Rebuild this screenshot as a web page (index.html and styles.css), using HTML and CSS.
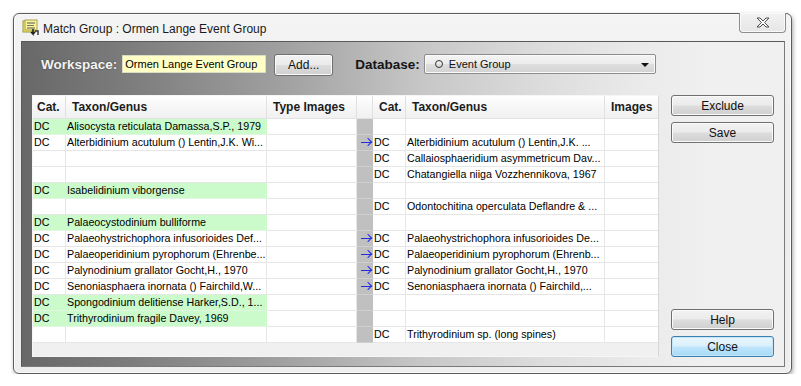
FILE: index.html
```html
<!DOCTYPE html>
<html lang="en">
<head>
    <meta charset="UTF-8">
    <title>Match Group</title>
    <link rel="stylesheet" href="styles.css">
</head>
<body>

<div class="window">
    <div class="titlebar">
        <svg class="app-icon" width="17" height="17" viewBox="0 0 17 17">
            <rect x="1" y="2" width="12" height="11" fill="#f6ec6a" stroke="#9a9440" stroke-width="1"/>
            <rect x="3" y="1" width="12" height="10" fill="#fbf59a" stroke="#a8a050" stroke-width="1"/>
            <line x1="5" y1="4" x2="13" y2="4" stroke="#555" stroke-width="1"/>
            <line x1="5" y1="6.5" x2="12" y2="6.5" stroke="#777" stroke-width="1"/>
            <line x1="5" y1="9" x2="13" y2="9" stroke="#555" stroke-width="1"/>
            <path d="M11 10 L11 15 L9 13 M11 15 L13 13" stroke="#222" stroke-width="1.6" fill="none"/>
            <path d="M13 12 L16 12 L16 16" stroke="#333" stroke-width="1.4" fill="none"/>
        </svg>
        <span class="title">Match Group : Ormen Lange Event Group</span>
        <div class="close-btn">
            <svg width="14" height="11" viewBox="0 0 14 11">
                <path d="M1 1 H4 L7 4 L10 1 H13 L8.6 5.5 L13 10 H10 L7 7 L4 10 H1 L5.4 5.5 Z" fill="#fdfdfd" stroke="#4c4c4c" stroke-width="1" stroke-linejoin="round"/>
            </svg>
        </div>
    </div>

    <div class="client">
        <div class="main">
            <!-- workspace / database toolbar -->
            <div class="toolbar">
                <span class="label light">Workspace:</span>
                <div class="ws-input">Ormen Lange Event Group</div>
                <button class="btn add-btn">Add...</button>
                <span class="label dark">Database:</span>
                <div class="combo">
                    <span class="radio"></span>
                    <span class="combo-text">Event Group</span>
                    <span class="combo-arrow"></span>
                </div>
            </div>

            <!-- match grid -->
            <div class="grid">
                <table>
                    <thead>
                        <tr>
                            <th class="c-cat">Cat.</th>
                            <th class="c-taxon">Taxon/Genus</th>
                            <th class="c-type">Type Images</th>
                            <th class="c-gap"></th>
                            <th class="c-cat2">Cat.</th>
                            <th class="c-taxon2">Taxon/Genus</th>
                            <th class="c-img">Images</th>
                        </tr>
                    </thead>
                    <tbody>
                        <tr>
                            <td class="green">DC</td><td class="green">Alisocysta reticulata Damassa,S.P., 1979</td><td></td>
                            <td class="gap"></td><td></td><td></td><td></td>
                        </tr>
                        <tr>
                            <td>DC</td><td>Alterbidinium acutulum () Lentin,J.K. Wi...</td><td></td>
                            <td class="gap"><span class="arrow"></span></td><td class="cat2">DC</td><td>Alterbidinium acutulum () Lentin,J.K. ...</td><td></td>
                        </tr>
                        <tr>
                            <td></td><td></td><td></td>
                            <td class="gap"></td><td class="cat2">DC</td><td>Callaiosphaeridium asymmetricum Dav...</td><td></td>
                        </tr>
                        <tr>
                            <td></td><td></td><td></td>
                            <td class="gap"></td><td class="cat2">DC</td><td>Chatangiella niiga Vozzhennikova, 1967</td><td></td>
                        </tr>
                        <tr>
                            <td class="green">DC</td><td class="green">Isabelidinium viborgense</td><td></td>
                            <td class="gap"></td><td></td><td></td><td></td>
                        </tr>
                        <tr>
                            <td></td><td></td><td></td>
                            <td class="gap"></td><td class="cat2">DC</td><td>Odontochitina operculata Deflandre &amp; ...</td><td></td>
                        </tr>
                        <tr>
                            <td class="green">DC</td><td class="green">Palaeocystodinium bulliforme</td><td></td>
                            <td class="gap"></td><td></td><td></td><td></td>
                        </tr>
                        <tr>
                            <td>DC</td><td>Palaeohystrichophora infusorioides Def...</td><td></td>
                            <td class="gap"><span class="arrow"></span></td><td class="cat2">DC</td><td>Palaeohystrichophora infusorioides De...</td><td></td>
                        </tr>
                        <tr>
                            <td>DC</td><td>Palaeoperidinium pyrophorum (Ehrenbe...</td><td></td>
                            <td class="gap"><span class="arrow"></span></td><td class="cat2">DC</td><td>Palaeoperidinium pyrophorum (Ehrenb...</td><td></td>
                        </tr>
                        <tr>
                            <td>DC</td><td>Palynodinium grallator Gocht,H., 1970</td><td></td>
                            <td class="gap"><span class="arrow"></span></td><td class="cat2">DC</td><td>Palynodinium grallator Gocht,H., 1970</td><td></td>
                        </tr>
                        <tr>
                            <td>DC</td><td>Senoniasphaera inornata () Fairchild,W...</td><td></td>
                            <td class="gap"><span class="arrow"></span></td><td class="cat2">DC</td><td>Senoniasphaera inornata () Fairchild,...</td><td></td>
                        </tr>
                        <tr>
                            <td class="green">DC</td><td class="green">Spongodinium delitiense Harker,S.D., 1...</td><td></td>
                            <td class="gap"></td><td></td><td></td><td></td>
                        </tr>
                        <tr>
                            <td class="green">DC</td><td class="green">Trithyrodinium fragile Davey, 1969</td><td></td>
                            <td class="gap"></td><td></td><td></td><td></td>
                        </tr>
                        <tr>
                            <td></td><td></td><td></td>
                            <td class="gap"></td><td class="cat2">DC</td><td>Trithyrodinium sp. (long spines)</td><td></td>
                        </tr>
                    </tbody>
                </table>
            </div>
        </div>

        <!-- side buttons -->
        <div class="side">
            <button class="btn side-btn">Exclude</button>
            <button class="btn side-btn">Save</button>
            <div class="spacer"></div>
            <button class="btn side-btn">Help</button>
            <button class="btn side-btn default">Close</button>
        </div>
    </div>
</div>

</body>
</html>
```

FILE: styles.css
```css
* {
    box-sizing: border-box;
}

body {
    margin: 0;
    background: #ffffff;
    font-family: "Liberation Sans", Arial, sans-serif;
    color: #000;
}

/* window frame */
.window {
    margin: 13px 0 0 13px;
    width: 779px;
    height: 361px;
    border: 1px solid #5c5c5c;
    border-radius: 6px;
    background: linear-gradient(#f4f4f4, #ececec 30%, #eeeeee);
    box-shadow: 1px 2px 4px rgba(0, 0, 0, 0.35), inset 0 0 0 1px #fbfbfb;
    display: flex;
    flex-direction: column;
}

.titlebar {
    height: 27px;
    display: flex;
    align-items: flex-start;
    padding-left: 8px;
}

.app-icon {
    margin-top: 5px;
    flex: none;
}

.title {
    margin-left: 4px;
    margin-top: 8px;
    font-size: 12px;
    color: #1a1a1a;
}

.close-btn {
    margin-left: auto;
    margin-right: 5px;
    margin-top: -1px;
    width: 47px;
    height: 20px;
    border: 1px solid #8d8d8d;
    border-top: none;
    border-radius: 0 0 4px 4px;
    background: linear-gradient(#f2f2f2, #e6e6e6);
    box-shadow: inset 0 0 0 1px #fafafa;
    display: flex;
    justify-content: center;
    align-items: center;
}

/* client area */
.client {
    flex: 1;
    margin: 0 6px 6px 7px;
    border: 1px solid #5a5a5a;
    border-right-color: #7a7a7a;
    border-bottom-color: #7a7a7a;
    background: linear-gradient(to right, #686868 0%, #7e7e7e 15%, #a2a2a2 35%, #c6c6c6 52%, #dcdcdc 68%, #ebebeb 82%, #f0f0f0 90%);
    display: flex;
    padding: 0 10px 9px 10px;
}

.main {
    width: 627px;
    display: flex;
    flex-direction: column;
}

.toolbar {
    height: 53px;
    padding-top: 12px;
    display: flex;
    align-items: flex-start;
}

.label {
    font-weight: bold;
    font-size: 13.5px;
    margin-top: 3px;
}

.label.light {
    margin-left: 9px;
    color: #f3f3f3;
    text-shadow: 0 0 2px rgba(40, 40, 40, 0.6);
}

.label.dark {
    margin-left: 22px;
    color: #151515;
}

.ws-input {
    margin-left: 5px;
    margin-top: 1px;
    width: 144px;
    height: 18px;
    background: #ffffc6;
    border: 1px solid #dcdcc0;
    font-size: 11px;
    padding: 2px 0 0 2px;
    white-space: nowrap;
}

.btn {
    font-family: "Liberation Sans", Arial, sans-serif;
    font-size: 12px;
    color: #111;
    border: 1px solid #707070;
    border-radius: 3px;
    background: linear-gradient(#f2f2f2 0%, #ebebeb 48%, #dddddd 52%, #cfcfcf 100%);
    box-shadow: inset 0 0 0 1px #fbfbfb;
    padding: 0;
}

.add-btn {
    margin-left: 8px;
    width: 59px;
    height: 22px;
}

.combo {
    margin-left: 4px;
    width: 232px;
    height: 20px;
    border: 1px solid #8c8c8c;
    border-radius: 2px;
    background: linear-gradient(#f4f4f4 0%, #ececec 48%, #dedede 52%, #d2d2d2 100%);
    box-shadow: inset 0 0 0 1px #fafafa;
    display: flex;
    align-items: center;
    font-size: 11px;
}

.radio {
    margin-left: 10px;
    width: 8px;
    height: 8px;
    border: 1px solid #333;
    border-radius: 50%;
}

.combo-text {
    margin-left: 6px;
    color: #111;
}

.combo-arrow {
    margin-left: auto;
    margin-right: 6px;
    margin-top: 2px;
    border-left: 4px solid transparent;
    border-right: 4px solid transparent;
    border-top: 4px solid #111;
}

/* grid */
.grid {
    height: 262px;
    background: #f0f0f0;
    border: 1px solid #f6f6f6;
    border-right-color: #d6d6d6;
    overflow: hidden;
}

.grid table {
    table-layout: fixed;
    border-collapse: separate;
    border-spacing: 0;
    width: 625px;
    font-size: 10.7px;
}

.grid th {
    height: 23px;
    padding: 0 0 0 6px;
    text-align: left;
    font-size: 12px;
    font-weight: bold;
    color: #1c1c1c;
    background: linear-gradient(#ffffff 0%, #f7f7f7 45%, #f1f1f1 100%);
    border-right: 1px solid #e0e0e0;
    border-bottom: 1px solid #e2e2e2;
    white-space: nowrap;
    overflow: hidden;
}

.grid th.c-cat {
    width: 33px;
    padding-left: 4px;
}

.grid th.c-taxon { width: 201px; }
.grid th.c-type { width: 90px; }
.grid th.c-gap { width: 16px; }
.grid th.c-cat2 { width: 33px; }
.grid th.c-taxon2 { width: 199px; }
.grid th.c-img { width: 53px; border-right: none; }

.grid td {
    height: 16px;
    padding: 0 0 0 1px;
    background: #ffffff;
    border-right: 1px solid #e6e6e6;
    border-bottom: 1px solid #e6e6e6;
    white-space: nowrap;
    overflow: hidden;
    line-height: 15px;
}

.grid td:last-child {
    border-right: none;
}

.grid td.green {
    background: #cbfbcb;
    border-right-color: #cbfbcb;
    border-bottom-color: #e2f4e2;
}

.grid td.gap {
    background: #c0c0c0;
    border-right: none;
    border-bottom-color: #cfcfcf;
    padding: 0;
    position: relative;
}

.grid td.cat2 {
    padding-left: 1px;
}

/* match arrow in the gap column */
.arrow {
    position: absolute;
    right: 1px;
    top: 7px;
    width: 11px;
    height: 1px;
    background: #1d2ee8;
}

.arrow::after {
    content: "";
    position: absolute;
    top: -3px;
    right: 1px;
    width: 5px;
    height: 5px;
    border-top: 1px solid #1d2ee8;
    border-right: 1px solid #1d2ee8;
    transform: rotate(45deg);
}

/* side buttons */
.side {
    margin-left: 12px;
    width: 103px;
    padding-top: 53px;
    display: flex;
    flex-direction: column;
    gap: 6px;
}

.side-btn {
    height: 21px;
    width: 103px;
}

.spacer {
    flex: 1;
}

.side-btn.default {
    border-color: #3c7fb1;
    background: linear-gradient(#eaf6fd 0%, #d9f0fc 48%, #bee6fd 52%, #a7d9f5 100%);
    box-shadow: inset 0 0 0 1px #c4e5f6;
}
```
